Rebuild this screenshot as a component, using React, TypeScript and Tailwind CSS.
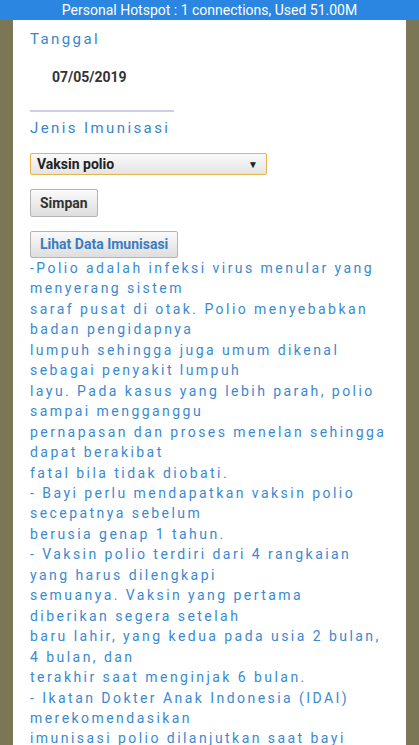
const lines = [
  "-Polio adalah infeksi virus menular yang",
  "menyerang sistem",
  "saraf pusat di otak. Polio menyebabkan",
  "badan pengidapnya",
  "lumpuh sehingga juga umum dikenal",
  "sebagai penyakit lumpuh",
  "layu. Pada kasus yang lebih parah, polio",
  "sampai mengganggu",
  "pernapasan dan proses menelan sehingga",
  "dapat berakibat",
  "fatal bila tidak diobati.",
  "- Bayi perlu mendapatkan vaksin polio",
  "secepatnya sebelum",
  "berusia genap 1 tahun.",
  "- Vaksin polio terdiri dari 4 rangkaian",
  "yang harus dilengkapi",
  "semuanya. Vaksin yang pertama",
  "diberikan segera setelah",
  "baru lahir, yang kedua pada usia 2 bulan,",
  "4 bulan, dan",
  "terakhir saat menginjak 6 bulan.",
  "- Ikatan Dokter Anak Indonesia (IDAI)",
  "merekomendasikan",
  "imunisasi polio dilanjutkan saat bayi",
];

export default function App() {
  return (
    <div className="w-[419px] h-[745px] overflow-hidden bg-[#7a7656] font-['Roboto',sans-serif] flex flex-col">
      {/* status bar */}
      <div className="h-[20px] shrink-0 bg-[#2a86e0] text-white text-[14px] leading-[20px] text-center">
        Personal Hotspot : 1 connections, Used 51.00M
      </div>

      <div className="ml-[13px] w-[393px] flex-1 bg-white pl-[17px] overflow-hidden">
        <div className="h-[47px] pt-[9px] text-[15px] leading-[20px] tracking-[2.4px] text-[#3a86c8]">
          Tanggal
        </div>
        <div className="h-[28px] pl-[22px] text-[14px] leading-[20px] font-bold text-[#333]">
          07/05/2019
        </div>
        <div className="mt-[15px] h-[2px] w-[144px] bg-[#d2cae6]" />
        <div className="h-[30px] pt-[6px] text-[15px] leading-[20px] tracking-[2.4px] text-[#3a86c8]">
          Jenis Imunisasi
        </div>
        <div className="mt-[11px] h-[22px] w-[237px] flex items-center justify-between border border-[#e6b44c] rounded-[2px] bg-gradient-to-b from-[#fafafa] to-[#e4e4e4] pl-[6px] pr-[8px]">
          <span className="text-[14px] font-bold text-[#222]">Vaksin polio</span>
          <span className="text-[10px] text-[#222]">▼</span>
        </div>
        <button className="mt-[14px] h-[28px] px-[9px] border border-[#b4b4b4] rounded-[2px] bg-gradient-to-b from-[#fafafa] to-[#dedede] text-[14px] font-bold text-[#333] block">
          Simpan
        </button>
        <button className="mt-[14px] h-[27px] px-[9px] border border-[#b4b4b4] rounded-[2px] bg-gradient-to-b from-[#fafafa] to-[#dedede] text-[14px] font-bold text-[#3b7cc0] block">
          Lihat Data Imunisasi
        </button>
        <div className="text-[14px] leading-[20.45px] tracking-[2.45px] text-[#3a8ad0] whitespace-nowrap">
          {lines.map((l, i) => (
            <div key={i}>{l}</div>
          ))}
        </div>
      </div>
    </div>
  );
}
